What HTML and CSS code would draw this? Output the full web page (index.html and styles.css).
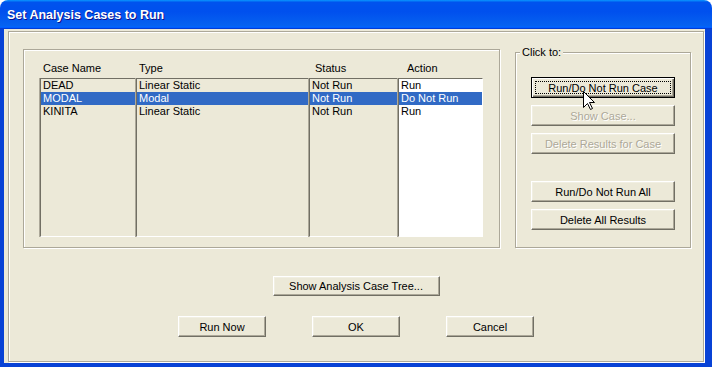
FILE: index.html
```html
<!DOCTYPE html>
<html lang="en">

<head>
    <meta charset="UTF-8">
    <title>Set Analysis Cases to Run</title>
    <link rel="stylesheet" href="styles.css">
</head>

<body>
    <div class="window">
        <div class="titlebar">
            <span class="title">Set Analysis Cases to Run</span>
        </div>
        <div class="client">
            <div class="frame">
                <div class="top">
                    <div class="cases">
                        <div class="list">
                            <div class="col col-name">
                                <div class="head">Case Name</div>
                                <div class="box">
                                    <div class="row">DEAD</div>
                                    <div class="row sel">MODAL</div>
                                    <div class="row">KINITA</div>
                                </div>
                            </div>
                            <div class="col col-type">
                                <div class="head">Type</div>
                                <div class="box">
                                    <div class="row">Linear Static</div>
                                    <div class="row sel">Modal</div>
                                    <div class="row">Linear Static</div>
                                </div>
                            </div>
                            <div class="col col-status">
                                <div class="head">Status</div>
                                <div class="box">
                                    <div class="row">Not Run</div>
                                    <div class="row sel">Not Run</div>
                                    <div class="row">Not Run</div>
                                </div>
                            </div>
                            <div class="col col-action">
                                <div class="head">Action</div>
                                <div class="box white">
                                    <div class="row">Run</div>
                                    <div class="row sel">Do Not Run</div>
                                    <div class="row">Run</div>
                                </div>
                            </div>
                        </div>
                    </div>
                    <fieldset class="clickto">
                        <legend>Click to:</legend>
                        <button class="btn side focus">Run/Do Not Run Case</button>
                        <button class="btn side" disabled>Show Case...</button>
                        <button class="btn side" disabled>Delete Results for Case</button>
                        <button class="btn side gap">Run/Do Not Run All</button>
                        <button class="btn side">Delete All Results</button>
                    </fieldset>
                </div>
                <div class="tree-row">
                    <button class="btn tree">Show Analysis Case Tree...</button>
                </div>
                <div class="actions">
                    <button class="btn act">Run Now</button>
                    <button class="btn act">OK</button>
                    <button class="btn act">Cancel</button>
                </div>
            </div>
        </div>
        <svg class="cursor" width="13" height="20" viewBox="0 0 13 20">
            <path d="M0.5 0.5 V16.5 L4.5 12.5 L7.5 18.5 L9.5 17.5 L6.5 11.5 H11.5 Z" fill="#fff" stroke="#000" stroke-width="1" stroke-linejoin="miter"/>
        </svg>
    </div>
</body>

</html>
```

FILE: styles.css
```css
* {
    box-sizing: border-box;
}

body {
    margin: 0;
    background-color: #fff;
    font-family: "Liberation Sans", Arial, sans-serif;
    font-size: 11px;
}

.window {
    position: relative;
    width: 712px;
    height: 367px;
    display: flex;
    flex-direction: column;
}

.titlebar {
    height: 29px;
    flex: none;
    border-radius: 8px 8px 0 0;
    background: linear-gradient(180deg, #0997ff, #0053ee 8%, #0050ee 40%, #0662f0 88%, #0066ff 93%, #005bff 95%, #003dd7 96%, #003dd7);
    display: flex;
    align-items: center;
    padding-left: 7px;
}

.title {
    color: #fff;
    font-weight: bold;
    font-size: 12.5px;
    text-shadow: 1px 1px 0 #0f1089;
    margin-top: 1px;
}

.client {
    flex: 1;
    background-color: #ECE9D8;
    border-left: 4px solid #0842d6;
    border-right: 7px solid #0842d6;
    border-bottom: 4px solid #0842d6;
    padding: 2px 0 0 4px;
}

.frame {
    width: 696px;
    height: 331px;
    border: 1px solid #ACA899;
    box-shadow: inset 1px 1px 0 #fff, 1px 1px 0 #fff;
    padding-left: 14px;
}

.top {
    display: flex;
    align-items: flex-start;
}

.cases {
    margin-top: 17px;
    width: 477px;
    height: 199px;
    border: 1px solid #ACA899;
    box-shadow: inset 1px 1px 0 #fff, 1px 1px 0 #fff;
    padding: 12px 0 0 16px;
}

.list {
    display: flex;
}

.head {
    height: 13px;
    line-height: 13px;
    margin-bottom: 3px;
    padding-left: 3px;
    white-space: nowrap;
}

.col-name { width: 96px; }
.col-type { width: 173px; }
.col-status { width: 89px; }
.col-action { width: 85px; }

.col-status .head { padding-left: 6px; }
.col-action .head { padding-left: 9px; }

.box {
    height: 159px;
    border: 1px solid;
    border-color: #716F64 #fff #fff #716F64;
    box-shadow: -1px 0 0 #ACA899;
    background-color: #ECE9D8;
}

.box.white {
    background-color: #fff;
}

.row {
    height: 13px;
    line-height: 13px;
    padding-left: 2px;
    white-space: nowrap;
}

.row.sel {
    background-color: #316AC5;
    color: #fff;
}

.clickto {
    margin: 14px 0 0 15px;
    width: 176px;
    height: 202px;
    border: 1px solid #ACA899;
    box-shadow: inset 1px 1px 0 #fff, 1px 1px 0 #fff;
    padding: 18px 0 0 15px;
    display: flex;
    flex-direction: column;
    gap: 7px;
}

.clickto legend {
    padding: 0 2px;
    margin-left: -11px;
    line-height: 13px;
    background-color: #ECE9D8;
}

.btn {
    font-family: "Liberation Sans", Arial, sans-serif;
    font-size: 11px;
    color: #000;
    background-color: #ECE9D8;
    border: 1px solid;
    border-color: #fff #716F64 #716F64 #fff;
    box-shadow: inset -1px -1px 0 #ACA899, inset 1px 1px 0 #F1EFE2;
    padding: 0;
    margin: 0;
}

.btn:disabled {
    color: #ACA899;
    text-shadow: 1px 1px 0 #fff;
}

.btn.focus {
    border-color: #000;
    box-shadow: inset 1px 1px 0 #fff, inset -1px -1px 0 #716F64, inset -2px -2px 0 #ACA899;
    outline: 1px dotted #000;
    outline-offset: -5px;
}

.side {
    width: 144px;
    height: 21px;
    flex: none;
}

.side.gap {
    margin-top: 20px;
}

.tree-row {
    display: flex;
    justify-content: center;
    margin-top: 28px;
    margin-left: -14px;
}

.tree {
    width: 167px;
    height: 20px;
}

.actions {
    display: flex;
    justify-content: center;
    gap: 46px;
    margin-top: 20px;
    margin-left: -14px;
}

.act {
    width: 88px;
    height: 21px;
}

.cursor {
    position: absolute;
    left: 583px;
    top: 91px;
}
```
